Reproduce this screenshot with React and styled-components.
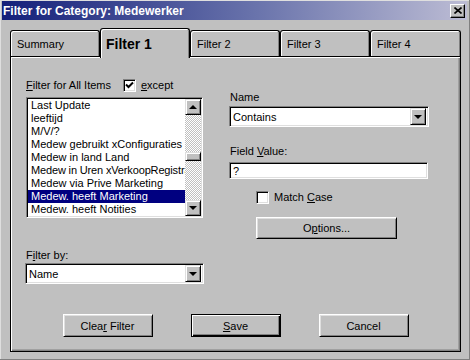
import React from "react";
import styled, { createGlobalStyle } from "styled-components";

const GlobalStyle = createGlobalStyle`
  html, body {
    margin: 0;
    padding: 0;
    background: #c0c0c0;
  }
  body {
    font-family: "Liberation Sans", Arial, sans-serif;
    font-size: 11px;
    color: #000;
  }
`;

const Window = styled.div`
  box-sizing: border-box;
  width: 470px;
  height: 360px;
  padding: 1px 2px 0 2px;
  background: #c0c0c0;
  border-right: 1px solid #808080;
  border-bottom: 1px solid #808080;
  box-shadow: inset 1px 1px #dfdfdf;
`;

const TitleBar = styled.div`
  height: 19px;
  display: flex;
  align-items: center;
  justify-content: space-between;
  padding: 0 2px 0 1px;
  background: linear-gradient(to right, #14207a, #6a74ac 55%, #bcbcd4);
  color: #fff;
  font-weight: bold;
  font-size: 12px;
`;

const CloseButton = styled.div`
  box-sizing: border-box;
  width: 15px;
  height: 14px;
  display: flex;
  align-items: center;
  justify-content: center;
  background: #c0c0c0;
  border: 1px solid;
  border-color: #fff #000 #000 #fff;
  box-shadow: inset -1px -1px #808080;
`;

const Body = styled.div`
  padding: 8px 0 0 8px;
`;

const TabRow = styled.div`
  display: flex;
  align-items: flex-end;
  height: 28px;
  position: relative;
  z-index: 1;
`;

const Tab = styled.div`
  box-sizing: border-box;
  width: ${(p) => p.$w}px;
  height: ${(p) => (p.$active ? 30 : 26)}px;
  margin-bottom: ${(p) => (p.$active ? -2 : 0)}px;
  display: flex;
  align-items: center;
  padding-left: ${(p) => (p.$active ? 5 : 6)}px;
  padding-top: ${(p) => (p.$active ? 0 : 1)}px;
  background: #c0c0c0;
  border: 1px solid #000;
  border-bottom: none;
  border-radius: 3px 3px 0 0;
  box-shadow: inset 1px 1px #fff, inset -1px 0 #808080;
  font-size: ${(p) => (p.$active ? 14 : 11)}px;
  font-weight: ${(p) => (p.$active ? "bold" : "normal")};
`;

const Panel = styled.div`
  box-sizing: border-box;
  width: 451px;
  height: 296px;
  display: flex;
  flex-direction: column;
  padding: 20px 0 14px 0;
  border: 1px solid #000;
  box-shadow: inset 1px 1px #fff, inset -1px -1px #808080, inset -2px -2px #a0a0a0;
`;

const Columns = styled.div`
  display: flex;
`;

const LeftColumn = styled.div`
  width: 180px;
  margin-left: 14px;
  display: flex;
  flex-direction: column;
`;

const RightColumn = styled.div`
  width: 200px;
  margin-left: 24px;
  margin-top: 12px;
  display: flex;
  flex-direction: column;
`;

const LabelRow = styled.div`
  height: 16px;
  display: flex;
  align-items: center;
  padding-left: ${(p) => p.$indent || 1}px;
  margin-top: ${(p) => p.$top || 0}px;
  margin-bottom: ${(p) => p.$bottom || 0}px;
  white-space: nowrap;
`;

const Key = styled.span`
  text-decoration: underline;
`;

const CheckBox = styled.div`
  box-sizing: border-box;
  width: 13px;
  height: 13px;
  margin: 0 5px 0 ${(p) => p.$left || 0}px;
  background: #fff;
  border: 1px solid;
  border-color: #808080 #fff #fff #808080;
  box-shadow: inset 1px 1px #000, inset -1px -1px #dfdfdf;
  display: flex;
  align-items: center;
  justify-content: center;
`;

const ListBox = styled.div`
  box-sizing: border-box;
  width: 177px;
  height: 121px;
  margin: 4px 0 0 1px;
  display: flex;
  background: #fff;
  border: 1px solid;
  border-color: #808080 #fff #fff #808080;
  box-shadow: inset 1px 1px #000, inset -1px -1px #dfdfdf;
  padding: 1px;
`;

const Items = styled.div`
  flex: 1;
  min-width: 0;
  overflow: hidden;
`;

const Item = styled.div`
  height: 13px;
  line-height: 13px;
  padding-left: 3px;
  white-space: nowrap;
  overflow: hidden;
  letter-spacing: ${(p) => (p.$long ? "-0.15px" : "0")};
  background: ${(p) => (p.$selected ? "#000080" : "transparent")};
  color: ${(p) => (p.$selected ? "#fff" : "#000")};
`;

const ScrollBar = styled.div`
  width: 16px;
  display: flex;
  flex-direction: column;
  background: repeating-conic-gradient(#c0c0c0 0 25%, #fff 0 50%) 0 0 / 2px 2px;
`;

const RaisedBox = styled.div`
  box-sizing: border-box;
  width: 16px;
  height: ${(p) => p.$h || 16}px;
  margin-top: ${(p) => p.$top || 0}px;
  flex-shrink: 0;
  display: flex;
  align-items: center;
  justify-content: center;
  background: #c0c0c0;
  border: 1px solid;
  border-color: #dfdfdf #000 #000 #dfdfdf;
  box-shadow: inset 1px 1px #fff, inset -1px -1px #808080;
`;

const Track = styled.div`
  flex: 1;
`;

const Arrow = styled.div`
  width: 0;
  height: 0;
  border-left: 4px solid transparent;
  border-right: 4px solid transparent;
  ${(p) => (p.$up ? "border-bottom: 4px solid #000;" : "border-top: 4px solid #000;")}
`;

const Field = styled.div`
  box-sizing: border-box;
  width: ${(p) => p.$w}px;
  height: ${(p) => p.$h}px;
  display: flex;
  align-items: center;
  justify-content: space-between;
  padding: 2px 2px 2px 3px;
  background: #fff;
  border: 1px solid;
  border-color: #808080 #fff #fff #808080;
  box-shadow: inset 1px 1px #000, inset -1px -1px #dfdfdf;
  white-space: nowrap;
`;

const Button = styled.div`
  box-sizing: border-box;
  width: ${(p) => p.$w || 90}px;
  height: ${(p) => p.$h || 23}px;
  margin-left: ${(p) => p.$left || 0}px;
  margin-top: ${(p) => p.$top || 0}px;
  display: flex;
  align-items: center;
  justify-content: center;
  background: #c0c0c0;
  border: 1px solid;
  border-color: #fff #000 #000 #fff;
  box-shadow: inset 1px 1px #dfdfdf, inset -1px -1px #808080;
  ${(p) =>
    p.$default &&
    `border-color: #000; box-shadow: inset 1px 1px #fff, inset -1px -1px #000, inset -2px -2px #808080;`}
`;

const ButtonRow = styled.div`
  margin-top: auto;
  display: flex;
  justify-content: center;
  gap: 38px;
`;

const items = [
  "Last Update",
  "leeftijd",
  "M/V/?",
  "Medew gebruikt xConfiguraties",
  "Medew in land Land",
  "Medew in Uren xVerkoopRegistratie",
  "Medew via Prive Marketing",
  "Medew. heeft Marketing",
  "Medew. heeft Notities",
];

function DropArrow() {
  return (
    <RaisedBox $h={17}>
      <Arrow />
    </RaisedBox>
  );
}

function Check() {
  return (
    <svg width="9" height="9" viewBox="0 0 9 9">
      <polyline points="1,3.5 3.5,6 8,1.5" fill="none" stroke="#000" strokeWidth="2" />
    </svg>
  );
}

export default function App() {
  return (
    <>
      <GlobalStyle />
      <Window>
        <TitleBar>
          <span>Filter for Category: Medewerker</span>
          <CloseButton>
            <svg width="8" height="7" viewBox="0 0 8 7">
              <path d="M0.5 0.5 L7.5 6.5 M7.5 0.5 L0.5 6.5" stroke="#000" strokeWidth="1.6" />
            </svg>
          </CloseButton>
        </TitleBar>
        <Body>
          <TabRow>
            <Tab $w={90}>Summary</Tab>
            <Tab $w={90} $active>Filter 1</Tab>
            <Tab $w={90}>Filter 2</Tab>
            <Tab $w={90}>Filter 3</Tab>
            <Tab $w={91}>Filter 4</Tab>
          </TabRow>
          <Panel>
            <Columns>
              <LeftColumn>
                <LabelRow>
                  <span>
                    <Key>F</Key>ilter for All Items
                  </span>
                  <CheckBox $left={12}>
                    <Check />
                  </CheckBox>
                  <span>
                    <Key>e</Key>xcept
                  </span>
                </LabelRow>
                <ListBox>
                  <Items>
                    {items.map((t) => (
                      <Item
                        key={t}
                        $selected={t === "Medew. heeft Marketing"}
                        $long={t.length > 30}
                      >
                        {t}
                      </Item>
                    ))}
                  </Items>
                  <ScrollBar>
                    <RaisedBox>
                      <Arrow $up />
                    </RaisedBox>
                    <Track>
                      <RaisedBox $h={9} $top={37} />
                    </Track>
                    <RaisedBox>
                      <Arrow />
                    </RaisedBox>
                  </ScrollBar>
                </ListBox>
                <LabelRow $top={29}>
                  <span>
                    F<Key>i</Key>lter by:
                  </span>
                </LabelRow>
                <Field $w={179} $h={21}>
                  <span>Name</span>
                  <DropArrow />
                </Field>
              </LeftColumn>
              <RightColumn>
                <LabelRow $bottom={1}>Name</LabelRow>
                <Field $w={200} $h={21}>
                  <span>Contains</span>
                  <DropArrow />
                </Field>
                <LabelRow $top={16} $bottom={3}>
                  <span>
                    Field <Key>V</Key>alue:
                  </span>
                </LabelRow>
                <Field $w={199} $h={17}>
                  <span>?</span>
                </Field>
                <LabelRow $top={10} $indent={27}>
                  <CheckBox />
                  <span>
                    Match <Key>C</Key>ase
                  </span>
                </LabelRow>
                <Button $w={141} $h={22} $left={27} $top={12}>
                  <span>
                    O<Key>p</Key>tions...
                  </span>
                </Button>
              </RightColumn>
            </Columns>
            <ButtonRow>
              <Button>
                <span>
                  Clea<Key>r</Key> Filter
                </span>
              </Button>
              <Button $default>
                <span>
                  <Key>S</Key>ave
                </span>
              </Button>
              <Button>Cancel</Button>
            </ButtonRow>
          </Panel>
        </Body>
      </Window>
    </>
  );
}
